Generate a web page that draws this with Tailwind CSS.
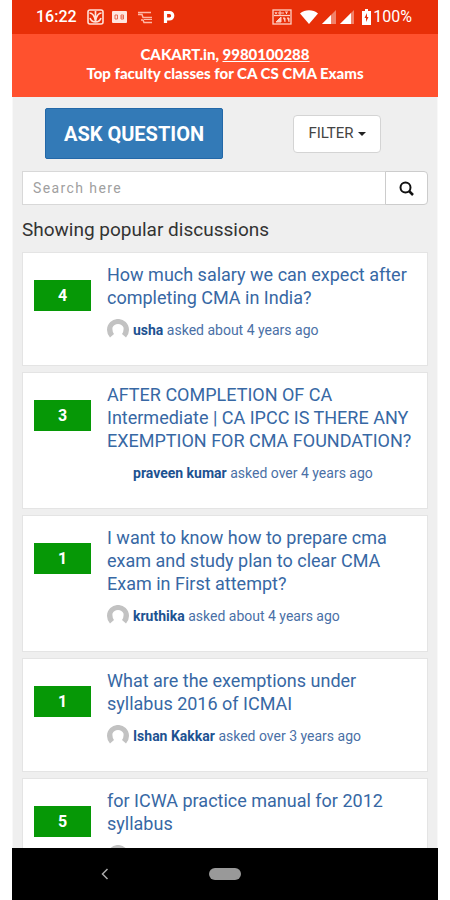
<!DOCTYPE html>
<html lang="en">
<head>
    <meta charset="UTF-8">
    <meta name="viewport" content="width=device-width, initial-scale=1.0">
    <title>CAKART Discussions</title>
    <script src="https://cdn.jsdelivr.net/npm/@tailwindcss/browser@4"></script>
</head>
<body class="bg-white font-[Roboto,sans-serif]">
    <div class="h-screen mx-3 flex flex-col overflow-hidden bg-[#efefef]">
        <!-- Status bar -->
        <div class="h-[34px] shrink-0 bg-[#e82f08] text-white pl-6 pr-[26px] flex items-center justify-between">
            <div class="flex items-center gap-2">
                <span class="text-base font-medium">16:22</span>
                <svg class="w-[17px] h-4 ml-0.5" viewBox="0 0 17 16" fill="none" stroke="#ffe0d8">
                    <rect x="1" y="1" width="15" height="14" rx="2" stroke-width="1.6"/>
                    <path d="M2.500 4c3 0 5 3 6 8 1-5 3-8 6-8M8.500 2v9M3 9c1 3 3 4 5.500 4s4.500-1 5.500-4" stroke-width="1.7"/>
                </svg>
                <svg class="w-[15px] h-4" viewBox="0 0 15 16">
                    <rect y="2" width="15" height="12" rx="1" fill="#ffe6df"/>
                    <path d="M3 6h2.500v4H3zM9 6h2.500v4H9zM9 8h2.500" fill="none" stroke="#e86a50"/>
                </svg>
                <svg class="w-4 h-4 mx-0.5" viewBox="0 0 16 16" fill="none" stroke="#ffb7a5">
                    <path d="M1 3.500h13M1 5.500h4l1 3h9M4 11h2l1 2.500h8" stroke-width="1.5"/>
                    <path d="M7 10.500h8" stroke-width="1"/>
                </svg>
                <svg class="w-3 h-4" viewBox="0 0 12 16" fill="none" stroke="currentColor">
                    <path d="M2.500 14V3.500h4a3 3 0 0 1 0 6.500h-4" stroke-width="3.200"/>
                </svg>
            </div>
            <div class="flex items-center gap-1">
                <svg class="w-5 h-4" viewBox="0 0 20 16" fill="none" stroke="#ffd0c4">
                    <rect x="1" y="1" width="18" height="14" stroke-width="1.300"/>
                    <path d="M2 6.500h16" stroke-width="1.300"/>
                    <path d="M3 3l1 2 1-2M7 3h2v2H7zM11 5V3M13 3h3M14.500 3v2"/>
                    <path d="M4 13h5V8zM11 9h2v4M15 9h2v4" fill="#ffd0c4"/>
                </svg>
                <svg class="w-[18px] h-[14px] ml-1" viewBox="0 0 18 14" fill="currentColor">
                    <path d="M0 3.500C5-.8 13-.8 18 3.500L9 14z"/>
                </svg>
                <svg class="w-[14px] h-[14px]" viewBox="0 0 14 14" fill="currentColor">
                    <path d="M0 14L14 0v14z" opacity=".4"/>
                    <path d="M0 14L9 5v9z"/>
                </svg>
                <svg class="w-[14px] h-[14px]" viewBox="0 0 14 14" fill="currentColor">
                    <path d="M0 14L14 0v14z" opacity=".4"/>
                    <path d="M0 14L11 3v11z"/>
                </svg>
                <div class="flex items-center gap-0.5 ml-1">
                    <svg class="w-[9px] h-4" viewBox="0 0 9 16">
                        <path d="M3 0h3v2h3v14H0V2h3z" fill="currentColor"/>
                        <path d="M5 4L2.500 9H4v4l2.500-5H5z" fill="#e82f08"/>
                    </svg>
                    <span class="text-base">100%</span>
                </div>
            </div>
        </div>

        <!-- Header -->
        <header class="h-[63px] shrink-0 bg-[#ff512e] text-white text-center font-[Lato,sans-serif] font-black text-[15px] leading-[19px] pt-[11px]">
            <p>CAKART.in, <a href="tel:9980100288" class="underline">9980100288</a></p>
            <p>Top faculty classes for CA CS CMA Exams</p>
        </header>

        <main class="flex-1 min-h-0 overflow-hidden px-[9px] pt-[11px] border-x border-[#f8f8f8]">
            <div class="flex items-center justify-between pl-[23px] pr-[47px]">
                <button type="button" class="w-[178px] h-[51px] bg-[#337ab7] border border-[#2368a8] rounded-xs text-white text-xl font-bold">ASK QUESTION</button>
                <button type="button" class="w-[88px] h-[38px] bg-white border border-[#d4d4d4] rounded text-[#444] text-[15px] flex items-center justify-center gap-1">
                    FILTER
                    <svg class="w-2 h-1" viewBox="0 0 8 4" fill="#222"><path d="M0 0h8L4 4z"/></svg>
                </button>
            </div>

            <form class="flex mt-3">
                <input type="search" aria-label="Search discussions" placeholder="Search here"
                       class="flex-1 min-w-0 h-[34px] bg-white border border-[#d8d8d8] px-[10px] text-sm tracking-widest placeholder:text-[#a0a0a0]">
                <button type="submit" aria-label="Search"
                        class="w-[43px] h-[34px] -ml-px bg-white border border-[#ccc] rounded-r flex items-center justify-center">
                    <svg class="w-[15px] h-[15px]" viewBox="0 0 15 15" fill="none" stroke="#111">
                        <circle cx="6.500" cy="6.500" r="5" stroke-width="2"/>
                        <path d="M10 10l4 4" stroke-width="2.500"/>
                    </svg>
                </button>
            </form>

            <h1 class="mt-[13px] text-[19px] leading-6 text-[#333]">Showing popular discussions</h1>

            <div id="discussions" class="mt-[10px] space-y-[6px]"></div>
        </main>

        <!-- System navigation -->
        <nav class="h-[52px] shrink-0 bg-black grid grid-cols-[1fr_32px_1fr] items-center">
            <button type="button" aria-label="Back" class="justify-self-center pr-3">
                <svg class="w-2 h-3" viewBox="0 0 8 12" fill="none" stroke="#aaa" stroke-width="1.500"><path d="M6.500 1L1.500 6l5 5"/></svg>
            </button>
            <button type="button" aria-label="Home" class="w-8 h-3 rounded-full bg-[#999]"></button>
        </nav>
    </div>

    <script>
        const discussions = [
            { votes: 4, title: 'How much salary we can expect after completing CMA in India?', user: 'usha', time: 'about 4 years ago', avatar: true },
            { votes: 3, title: 'AFTER COMPLETION OF CA Intermediate | CA IPCC IS THERE ANY EXEMPTION FOR CMA FOUNDATION?', user: 'praveen kumar', time: 'over 4 years ago', avatar: false },
            { votes: 1, title: 'I want to know how to prepare cma exam and study plan to clear CMA Exam in First attempt?', user: 'kruthika', time: 'about 4 years ago', avatar: true },
            { votes: 1, title: 'What are the exemptions under syllabus 2016 of ICMAI', user: 'Ishan Kakkar', time: 'over 3 years ago', avatar: true },
            { votes: 5, title: 'for ICWA practice manual for 2012 syllabus', avatar: true }
        ];

        const avatarIcon = `
            <svg class="w-[22px] h-[22px]" viewBox="0 0 22 22">
                <path d="M3 18.500A11 11 0 1 1 19 18.500L15 15Q17 12 16.500 8.500Q15 5 11 5T5.500 8.500Q5 12 7 15Z" fill="#c2c2c2"/>
            </svg>`;

        const list = document.getElementById('discussions');
        discussions.forEach(item => {
            const card = document.createElement('article');
            card.className = 'flex items-start gap-4 bg-white border border-[#e4e4e4] pt-[10px] pl-[11px] pr-3 pb-[24px]';
            card.innerHTML = `
                <span class="w-[57px] h-[31px] mt-[17px] shrink-0 bg-[#069806] text-white text-base font-bold flex items-center justify-center">${item.votes}</span>
                <div class="min-w-0 flex-1">
                    <h2 class="text-lg leading-[23px] text-[#3768a4]"><a href="#">${item.title}</a></h2>
                    <div class="mt-[10px] h-[22px] flex items-center gap-1 text-sm text-[#4a70a6]">
                        <span class="w-[22px] h-[22px]">${item.avatar ? avatarIcon : ''}</span>
                        ${item.user ? `<p><a href="#" class="font-bold text-[#1d5291]">${item.user}</a> asked ${item.time}</p>` : ''}
                    </div>
                </div>
            `;
            list.appendChild(card);
        });
    </script>
</body>
</html>
